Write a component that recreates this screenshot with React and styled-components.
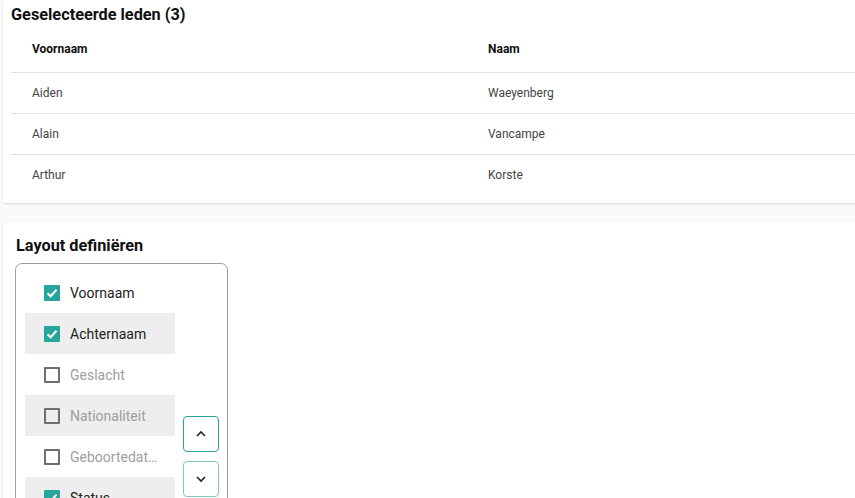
import React from "react";
import styled, { createGlobalStyle } from "styled-components";

const GlobalStyle = createGlobalStyle`
  body {
    margin: 0;
    background: #fafafa;
    font-family: Roboto, "Liberation Sans", sans-serif;
    overflow: hidden;
  }
`;

const Page = styled.div`
  display: flex;
  flex-direction: column;
  gap: 20px;
  padding-left: 3px;
`;

const Card = styled.section`
  background: #fff;
  box-shadow: 0 1px 2px rgba(0, 0, 0, 0.14);
  border-radius: 2px;
  width: 900px;
  padding: ${(p) => p.$pad};
`;

const Title = styled.h2`
  margin: 0;
  font-size: 16.3px;
  line-height: 22px;
  font-weight: 700;
  color: #111;
  padding-left: ${(p) => p.$indent || 0}px;
`;

const Table = styled.div``;

const Row = styled.div`
  display: grid;
  grid-template-columns: 456px 1fr;
  height: ${(p) => (p.$head ? 47 : 41)}px;
  align-items: center;
  border-bottom: 1px solid ${(p) => (p.$last ? "transparent" : "#e0e0e0")};
  box-sizing: border-box;
  font-size: 12px;
  font-weight: ${(p) => (p.$head ? 700 : 400)};
  color: ${(p) => (p.$head ? "#111" : "#444")};
`;

const Cell = styled.div`
  padding-left: 21px;
`;

const LayoutBox = styled.div`
  margin-top: 6px;
  width: 213px;
  box-sizing: border-box;
  border: 1px solid #9e9e9e;
  border-radius: 7px;
  padding: 8px 9px;
  display: flex;
  gap: 8px;
`;

const List = styled.div`
  width: 150px;
  display: flex;
  flex-direction: column;
`;

const Item = styled.label`
  height: 41px;
  box-sizing: border-box;
  display: flex;
  align-items: center;
  padding: 0 14px 0 19px;
  gap: 10px;
  background: ${(p) => (p.$odd ? "#eeeeee" : "transparent")};
  font-size: 14px;
  color: ${(p) => (p.$checked ? "#222" : "#9e9e9e")};
  white-space: nowrap;
`;

const Label = styled.span`
  min-width: 0;
  overflow: hidden;
  text-overflow: ellipsis;
`;

const Box = styled.span`
  flex: none;
  width: 16px;
  height: 16px;
  box-sizing: border-box;
  border-radius: 1px;
  display: flex;
  align-items: center;
  justify-content: center;
  background: ${(p) => (p.$checked ? "#26a69a" : "transparent")};
  border: ${(p) => (p.$checked ? "none" : "2px solid #6e6e6e")};
`;

const Controls = styled.div`
  display: flex;
  flex-direction: column;
  justify-content: center;
  gap: 9px;
`;

const MoveButton = styled.button`
  width: 36px;
  height: 36px;
  padding: 0;
  background: #fff;
  border: 1px solid ${(p) => (p.$light ? "#7fcbc3" : "#26a69a")};
  border-radius: 4px;
  display: flex;
  align-items: center;
  justify-content: center;
  cursor: pointer;
`;

const members = [
  ["Aiden", "Waeyenberg"],
  ["Alain", "Vancampe"],
  ["Arthur", "Korste"],
];

const fields = [
  ["Voornaam", true],
  ["Achternaam", true],
  ["Geslacht", false],
  ["Nationaliteit", false],
  ["Geboortedatum", false],
  ["Status", true],
  ["Functie", false],
  ["E-mail", false],
  ["Telefoon", false],
];

function Check() {
  return (
    <svg width="12" height="10" viewBox="0 0 12 10">
      <path d="M1.5 5.2 L4.6 8.2 L10.5 1.8" fill="none" stroke="#fff" strokeWidth="2" />
    </svg>
  );
}

function Chevron({ down }) {
  return (
    <svg width="12" height="8" viewBox="0 0 12 8">
      <path
        d={down ? "M2 2 L6 6 L10 2" : "M2 6 L6 2 L10 6"}
        fill="none"
        stroke="#222"
        strokeWidth="1.6"
      />
    </svg>
  );
}

export default function App() {
  return (
    <>
      <GlobalStyle />
      <Page>
        <Card $pad="4px 0 7px 8px">
          <Title>Geselecteerde leden (3)</Title>
          <Table>
            <Row $head>
              <Cell>Voornaam</Cell>
              <Cell>Naam</Cell>
            </Row>
            {members.map(([first, last], i) => (
              <Row key={first} $last={i === members.length - 1}>
                <Cell>{first}</Cell>
                <Cell>{last}</Cell>
              </Row>
            ))}
          </Table>
        </Card>
        <Card $pad="12px 0 20px 12px">
          <Title $indent={1}>Layout definiëren</Title>
          <LayoutBox>
            <List>
              {fields.map(([name, checked], i) => (
                <Item key={name} $odd={i % 2 === 1} $checked={checked}>
                  <Box $checked={checked}>{checked && <Check />}</Box>
                  <Label>{name}</Label>
                </Item>
              ))}
            </List>
            <Controls>
              <MoveButton>
                <Chevron />
              </MoveButton>
              <MoveButton $light>
                <Chevron down />
              </MoveButton>
            </Controls>
          </LayoutBox>
        </Card>
      </Page>
    </>
  );
}
